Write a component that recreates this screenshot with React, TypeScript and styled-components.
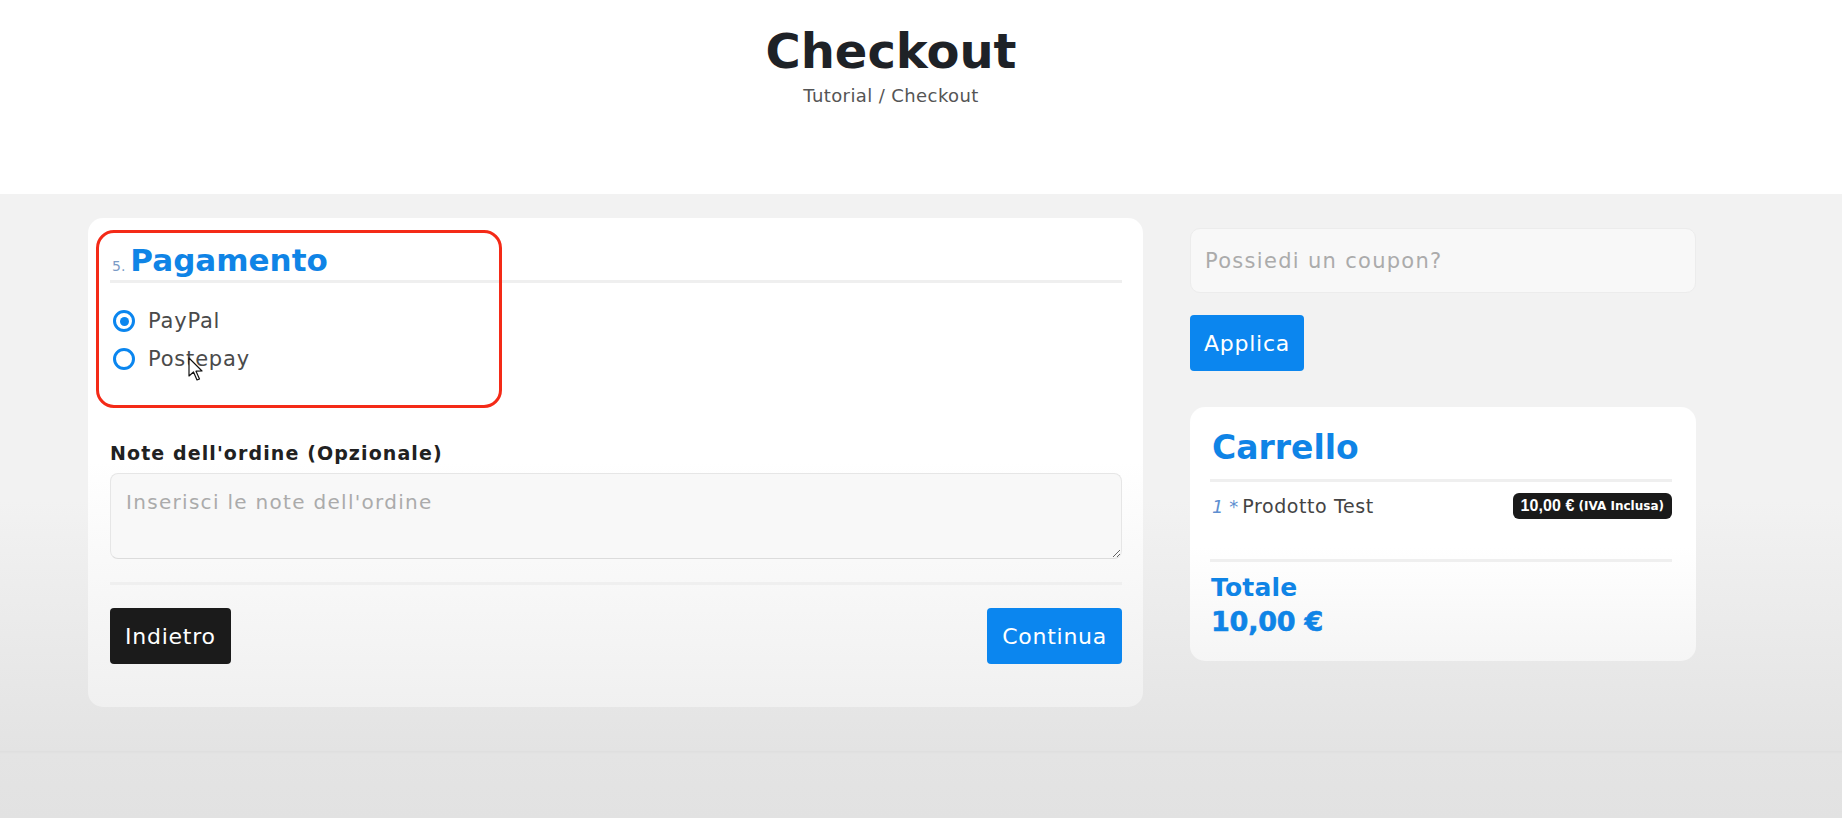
import React from "react";
import styled, { createGlobalStyle } from "styled-components";

const GlobalStyle = createGlobalStyle`
  html, body { margin: 0; padding: 0; }
  body {
    font-family: "DejaVu Sans", "Noto Sans", sans-serif;
    background: #e3e3e3;
    color: #333;
  }
  * { box-sizing: border-box; }
`;

const BLUE = "#0b86ef";
const HEAD_BLUE = "#0f84e6";

const Page = styled.div`
  width: 1842px;
  height: 818px;
  display: flex;
  flex-direction: column;
  overflow: hidden;
`;

const Header = styled.header`
  height: 194px;
  background: #ffffff;
  display: flex;
  flex-direction: column;
  align-items: center;
  padding: 24px 60px 0 0;
`;

const Title = styled.h1`
  margin: 0;
  font-size: 48px;
  line-height: 54px;
  font-weight: 700;
  color: #1e2227;
`;

const Crumbs = styled.div`
  margin-top: 7px;
  font-size: 18px;
  line-height: 22px;
  color: #555;
  letter-spacing: 0.4px;
`;

const Main = styled.main`
  height: 557px;
  background: linear-gradient(#f2f2f2 0%, #f2f2f2 55%, #e3e3e3 100%);
  display: flex;
  align-items: flex-start;
  gap: 47px;
  padding: 24px 0 0 88px;
`;

const Bottom = styled.div`
  flex: 1;
  background: linear-gradient(#dedede 0px, #e4e4e4 3px, #e2e2e2 100%);
`;

const Card = styled.section`
  position: relative;
  width: 1055px;
  background: linear-gradient(#ffffff 0%, #ffffff 50%, #f0f0f0 100%);
  border-radius: 15px;
  padding: 24px 21px 43px 22px;
  display: flex;
  flex-direction: column;
`;

const StepHead = styled.div`
  display: flex;
  align-items: baseline;
  gap: 5px;
  height: 36px;
  padding-left: 2px;
`;

const StepNum = styled.span`
  font-size: 14px;
  color: #7b9bc6;
`;

const StepTitle = styled.h2`
  margin: 0;
  font-size: 31px;
  line-height: 36px;
  font-weight: 700;
  color: ${HEAD_BLUE};
`;

const Divider = styled.div<{ $top: number }>`
  height: 3px;
  background: #efefef;
  margin-top: ${(p) => p.$top}px;
`;

const RadioList = styled.div`
  margin-top: 19px;
  display: flex;
  flex-direction: column;
`;

const RadioRow = styled.label`
  height: 38px;
  display: flex;
  align-items: center;
  gap: 13px;
  padding-left: 3px;
  font-size: 21px;
  color: #4a4a4a;
  letter-spacing: 0.8px;
  cursor: pointer;
`;

const RadioDot = styled.span<{ $checked?: boolean }>`
  width: 22px;
  height: 22px;
  border-radius: 50%;
  border: 3px solid ${BLUE};
  display: flex;
  align-items: center;
  justify-content: center;
  flex-shrink: 0;
  &::after {
    content: "";
    width: 9px;
    height: 9px;
    border-radius: 50%;
    background: ${(p) => (p.$checked ? BLUE : "transparent")};
  }
`;

const FieldLabel = styled.div`
  margin-top: 63px;
  font-size: 19px;
  line-height: 24px;
  font-weight: 700;
  color: #212121;
  letter-spacing: 1.1px;
`;

const NoteArea = styled.textarea`
  margin-top: 8px;
  height: 86px;
  width: 100%;
  resize: vertical;
  background: #f8f8f8;
  border: 1px solid #e6e6e6;
  border-bottom-color: #dcdcdc;
  border-radius: 8px;
  padding: 16px 15px 10px;
  font-family: "DejaVu Sans", sans-serif;
  font-size: 20px;
  letter-spacing: 1.3px;
  color: #333;
  outline: none;
  &::placeholder { color: #ababab; }
`;

const ButtonRow = styled.div`
  margin-top: 23px;
  display: flex;
  justify-content: space-between;
`;

const Button = styled.button<{ $variant: "dark" | "blue" }>`
  height: 56px;
  padding: 0 15px;
  border: none;
  border-radius: 4px;
  background: ${(p) => (p.$variant === "dark" ? "#1b1b1b" : BLUE)};
  color: #fff;
  font-family: "DejaVu Sans", sans-serif;
  font-size: 22px;
  letter-spacing: 0.75px;
  cursor: pointer;
`;

const Highlight = styled.div`
  position: absolute;
  left: 8px;
  top: 12px;
  width: 406px;
  height: 178px;
  border: 3px solid #f42a17;
  border-radius: 18px;
  pointer-events: none;
`;

const Cursor = styled.svg`
  position: absolute;
  left: 100px;
  top: 139px;
`;

const Side = styled.aside`
  width: 506px;
  display: flex;
  flex-direction: column;
  align-items: flex-start;
  padding-top: 10px;
`;

const CouponInput = styled.input`
  width: 506px;
  height: 65px;
  background: #f8f8f8;
  border: 1px solid #ececec;
  border-radius: 10px;
  padding: 0 14px;
  font-family: "DejaVu Sans", sans-serif;
  font-size: 21px;
  letter-spacing: 1.3px;
  outline: none;
  &::placeholder { color: #ababab; }
`;

const ApplyButton = styled(Button)`
  margin-top: 22px;
  padding: 0 14px;
`;

const CartCard = styled.section`
  margin-top: 36px;
  width: 506px;
  background: linear-gradient(#ffffff 0%, #ffffff 55%, #f5f5f5 100%);
  border-radius: 15px;
  padding: 20px 24px 24px 20px;
  display: flex;
  flex-direction: column;
`;

const CartTitle = styled.h2`
  margin: 0;
  font-size: 33px;
  line-height: 42px;
  font-weight: 700;
  color: ${HEAD_BLUE};
  padding-left: 2px;
`;

const ItemRow = styled.div`
  margin-top: 9px;
  height: 30px;
  display: flex;
  align-items: center;
  justify-content: space-between;
`;

const ItemName = styled.span`
  font-size: 19px;
  color: #444;
  letter-spacing: 0.6px;
  padding-left: 2px;
`;

const Qty = styled.em`
  color: #5e8fd0;
  font-size: 18px;
  margin-right: 4px;
  letter-spacing: 0;
`;

const Badge = styled.span`
  height: 26px;
  padding: 0 8px;
  background: #1a1a1a;
  border-radius: 6px;
  color: #fff;
  display: flex;
  align-items: center;
  gap: 4px;
`;

const BadgePrice = styled.span`
  font-family: "Liberation Sans", sans-serif;
  font-weight: 700;
  font-size: 16px;
  letter-spacing: 0.1px;
`;

const BadgeNote = styled.span`
  font-weight: 700;
  font-size: 12px;
`;

const TotalLabel = styled.div`
  margin-top: 10px;
  font-size: 25px;
  line-height: 32px;
  font-weight: 700;
  color: ${HEAD_BLUE};
  letter-spacing: 0.2px;
  padding-left: 1px;
`;

const TotalAmount = styled.div`
  margin-top: 3px;
  font-size: 27px;
  line-height: 30px;
  font-weight: 700;
  color: ${HEAD_BLUE};
  letter-spacing: -0.2px;
  padding-left: 1px;
  -webkit-text-stroke: 0.6px ${HEAD_BLUE};
`;

export default function App() {
  return (
    <>
      <GlobalStyle />
      <Page>
        <Header>
          <Title>Checkout</Title>
          <Crumbs>Tutorial / Checkout</Crumbs>
        </Header>
        <Main>
          <Card>
            <StepHead>
              <StepNum>5.</StepNum>
              <StepTitle>Pagamento</StepTitle>
            </StepHead>
            <Divider $top={2} />
            <RadioList>
              <RadioRow>
                <RadioDot $checked />
                PayPal
              </RadioRow>
              <RadioRow>
                <RadioDot />
                Postepay
              </RadioRow>
            </RadioList>
            <FieldLabel>Note dell'ordine (Opzionale)</FieldLabel>
            <NoteArea placeholder="Inserisci le note dell'ordine" />
            <Divider $top={23} />
            <ButtonRow>
              <Button $variant="dark">Indietro</Button>
              <Button $variant="blue">Continua</Button>
            </ButtonRow>
            <Highlight />
            <Cursor width="16" height="25" viewBox="0 0 16 25">
              <path
                d="M1 1 L1 19 L5.5 15 L9 23 L11.5 22 L8 14.2 L14 14 Z"
                fill="#ffffff"
                stroke="#111"
                strokeWidth="1.2"
                strokeLinejoin="round"
              />
            </Cursor>
          </Card>
          <Side>
            <CouponInput placeholder="Possiedi un coupon?" />
            <ApplyButton $variant="blue">Applica</ApplyButton>
            <CartCard>
              <CartTitle>Carrello</CartTitle>
              <Divider $top={10} />
              <ItemRow>
                <ItemName>
                  <Qty>1 *</Qty>Prodotto Test
                </ItemName>
                <Badge>
                  <BadgePrice>10,00 €</BadgePrice>
                  <BadgeNote>(IVA Inclusa)</BadgeNote>
                </Badge>
              </ItemRow>
              <Divider $top={38} />
              <TotalLabel>Totale</TotalLabel>
              <TotalAmount>10,00 €</TotalAmount>
            </CartCard>
          </Side>
        </Main>
        <Bottom />
      </Page>
    </>
  );
}
